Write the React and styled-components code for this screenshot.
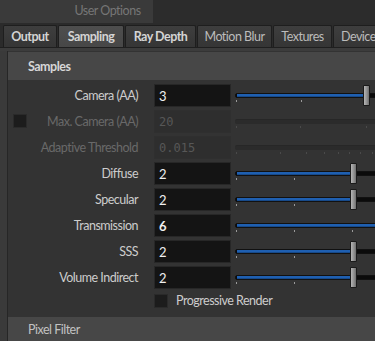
import React from "react";
import styled, { createGlobalStyle, css } from "styled-components";

const Global = createGlobalStyle`
  html, body { margin: 0; padding: 0; background: #2b2b2b; }
  body { font-family: Lato, "Noto Sans", sans-serif; font-size: 12.5px; letter-spacing: -0.5px; overflow: hidden; }
  * { box-sizing: border-box; }
`;

const Page = styled.div`
  width: 375px;
  height: 341px;
  overflow: hidden;
  background: #2b2b2b;
  display: flex;
  flex-direction: column;
`;

const TopBar = styled.div`
  flex: none;
  height: 23px;
  display: flex;
  background: #2c2c2c;
`;

const TopLeft = styled.div`
  width: 62px;
  background: #3a3a3a;
`;

const UserTab = styled.div`
  width: 91px;
  background: #3a3a3a;
  color: #767676;
  display: flex;
  align-items: center;
  justify-content: center;
  padding-bottom: 2px;
`;

const TabBar = styled.div`
  flex: none;
  height: 25px;
  display: flex;
  align-items: flex-end;
  padding-left: 3px;
  background: #2b2b2b;
  border-bottom: 1px solid #1f1f1f;
  white-space: nowrap;
`;

const Tab = styled.div`
  height: 22px;
  flex: none;
  width: ${p => p.$w}px;
  margin-right: 1px;
  display: flex;
  align-items: center;
  justify-content: ${p => (p.$edge ? "flex-start" : "center")};
  padding-left: ${p => (p.$edge ? 7 : 0)}px;
  border: 1px solid #1e1e1e;
  border-bottom: none;
  border-radius: 2px 2px 0 0;
  color: ${p => (p.$bold ? "#d4d4d4" : "#bcbcbc")};
  font-weight: ${p => (p.$bold ? 700 : 400)};
  background: ${p =>
    p.$active
      ? "linear-gradient(#4e4e4e, #474747)"
      : "linear-gradient(#3e3e3e, #353535)"};
`;

const Strip = styled.div`
  flex: none;
  height: 3px;
  background: #3c3c3c;
`;

const Body = styled.div`
  flex: none;
  display: flex;
  background: #3a3a3a;
`;

const Gutter = styled.div`
  width: 8px;
  background: #3a3a3a;
  border-right: 1px solid #262626;
`;

const Panel = styled.div`
  flex: 1;
  display: flex;
  flex-direction: column;
  background: #333333;
  padding-top: 1px;
`;

const SectionHeader = styled.div`
  height: ${p => p.$h}px;
  display: flex;
  align-items: center;
  padding-left: 20px;
  background: #474747;
  color: ${p => (p.$bold ? "#d6d6d6" : "#c2c2c2")};
  font-weight: ${p => (p.$bold ? 700 : 400)};
  flex: none;
`;

const Rows = styled.div`
  display: flex;
  flex-direction: column;
  padding-top: 4px;
`;

const Row = styled.div`
  height: 26px;
  display: grid;
  grid-template-columns: 20px 126px 77px 1fr;
  align-items: start;
`;

const Check = styled.div`
  width: 14px;
  height: 14px;
  background: #1c1c1c;
  border: 1px solid #2a2a2a;
  margin-left: ${p => p.$ml || 0}px;
  margin-top: ${p => p.$mt || 0}px;
`;

const Label = styled.div`
  line-height: 23px;
  text-align: right;
  padding-right: 16px;
  color: ${p => (p.$disabled ? "#696969" : "#cdcdcd")};
  white-space: nowrap;
`;

const Field = styled.div`
  height: 23px;
  background: ${p => (p.$disabled ? "#2e2e2e" : "#141414")};
  border: 1px solid ${p => (p.$disabled ? "#2f2f2f" : "#272727")};
  color: ${p => (p.$disabled ? "#575757" : "#f0f0f0")};
  display: flex;
  align-items: center;
  padding-left: 4px;
  letter-spacing: 0;
  font-family: ${p => (p.$mono ? '"DejaVu Sans Mono", monospace' : "inherit")};
  font-size: ${p => (p.$mono ? 12 : 13)}px;
  font-weight: ${p => (p.$bold ? 700 : 400)};
`;

const SliderBox = styled.div`
  position: relative;
  height: 23px;
  margin-left: 4px;
`;

const Track = styled.div`
  position: absolute;
  left: 0;
  right: -20px;
  top: 9px;
  height: 5px;
  border-radius: 2px;
  ${p =>
    p.$disabled
      ? css`
          background: #2b2b2b;
          border-top: 1px solid #272727;
        `
      : css`
          background: #0b0b0b;
          border: 1px solid #111;
        `}
`;

const Fill = styled.div`
  position: absolute;
  left: 1px;
  top: 0px;
  height: 3px;
  background: #1f5fb0;
  border-bottom: 1px solid #174a8a;
`;

const Tick = styled.div`
  position: absolute;
  top: 16px;
  width: 1px;
  height: 2px;
  background: ${p => (p.$disabled ? "#4a4a4a" : "#9a9a9a")};
`;

const Handle = styled.div`
  position: absolute;
  top: 1px;
  width: 7px;
  height: 21px;
  border: 1px solid #1a1a1a;
  border-radius: 1px;
  background: linear-gradient(90deg, #b5b5b5, #8e8e8e 60%, #6e6e6e);
`;

const ToggleRow = styled.div`
  height: 25px;
  display: grid;
  grid-template-columns: 146px 14px 1fr;
  align-items: start;
`;

const ToggleLabel = styled.div`
  color: #cdcdcd;
  padding-left: 8px;
  line-height: 18px;
`;

const SLIDER_X = 235;

function Slider({ disabled, fill, handle, ticks }) {
  return (
    <SliderBox>
      <Track $disabled={disabled}>
        {fill != null && <Fill style={{ width: fill - SLIDER_X }} />}
      </Track>
      {ticks.map(t => (
        <Tick key={t} $disabled={disabled} style={{ left: t - SLIDER_X }} />
      ))}
      {handle != null && <Handle style={{ left: handle - SLIDER_X }} />}
    </SliderBox>
  );
}

const rows = [
  { label: "Camera (AA)", value: "3", fill: 363, handle: 363, ticks: [236, 301, 366] },
  { label: "Max. Camera (AA)", value: "20", disabled: true, check: true, mono: true, ticks: [236, 300, 366] },
  { label: "Adaptive Threshold", value: "0.015", disabled: true, mono: true, ticks: [236, 280, 306, 324, 338, 349, 360, 372] },
  { label: "Diffuse", value: "2", fill: 350, handle: 350, ticks: [236, 294] },
  { label: "Specular", value: "2", fill: 350, handle: 350, ticks: [236, 294] },
  { label: "Transmission", value: "6", bold: true, fill: 400, ticks: [236, 294, 352] },
  { label: "SSS", value: "2", fill: 350, handle: 350, ticks: [236, 294] },
  { label: "Volume Indirect", value: "2", fill: 350, handle: 350, ticks: [236, 294] },
];

const tabs = [
  { t: "Output", w: 54, bold: true },
  { t: "Sampling", w: 66, bold: true, active: true },
  { t: "Ray Depth", w: 71, bold: true },
  { t: "Motion Blur", w: 75 },
  { t: "Textures", w: 59 },
  { t: "Device", w: 60, edge: true },
];

export default function App() {
  return (
    <Page>
      <Global />
      <TopBar>
        <TopLeft />
        <UserTab>User Options</UserTab>
      </TopBar>
      <TabBar>
        {tabs.map(t => (
          <Tab key={t.t} $w={t.w} $bold={t.bold} $active={t.active} $edge={t.edge}>
            {t.t}
          </Tab>
        ))}
      </TabBar>
      <Strip />
      <Body>
        <Gutter />
        <Panel>
          <SectionHeader $h={28} $bold>Samples</SectionHeader>
          <Rows>
            {rows.map(r => (
              <Row key={r.label}>
                {r.check ? <Check $ml={5} $mt={4} /> : <span />}
                <Label $disabled={r.disabled}>{r.label}</Label>
                <Field $disabled={r.disabled} $mono={r.mono} $bold={r.bold}>
                  {r.value}
                </Field>
                <Slider disabled={r.disabled} fill={r.fill} handle={r.handle} ticks={r.ticks} />
              </Row>
            ))}
            <ToggleRow>
              <span />
              <Check $mt={2} />
              <ToggleLabel>Progressive Render</ToggleLabel>
            </ToggleRow>
          </Rows>
          <SectionHeader $h={24}>Pixel Filter</SectionHeader>
        </Panel>
      </Body>
    </Page>
  );
}
